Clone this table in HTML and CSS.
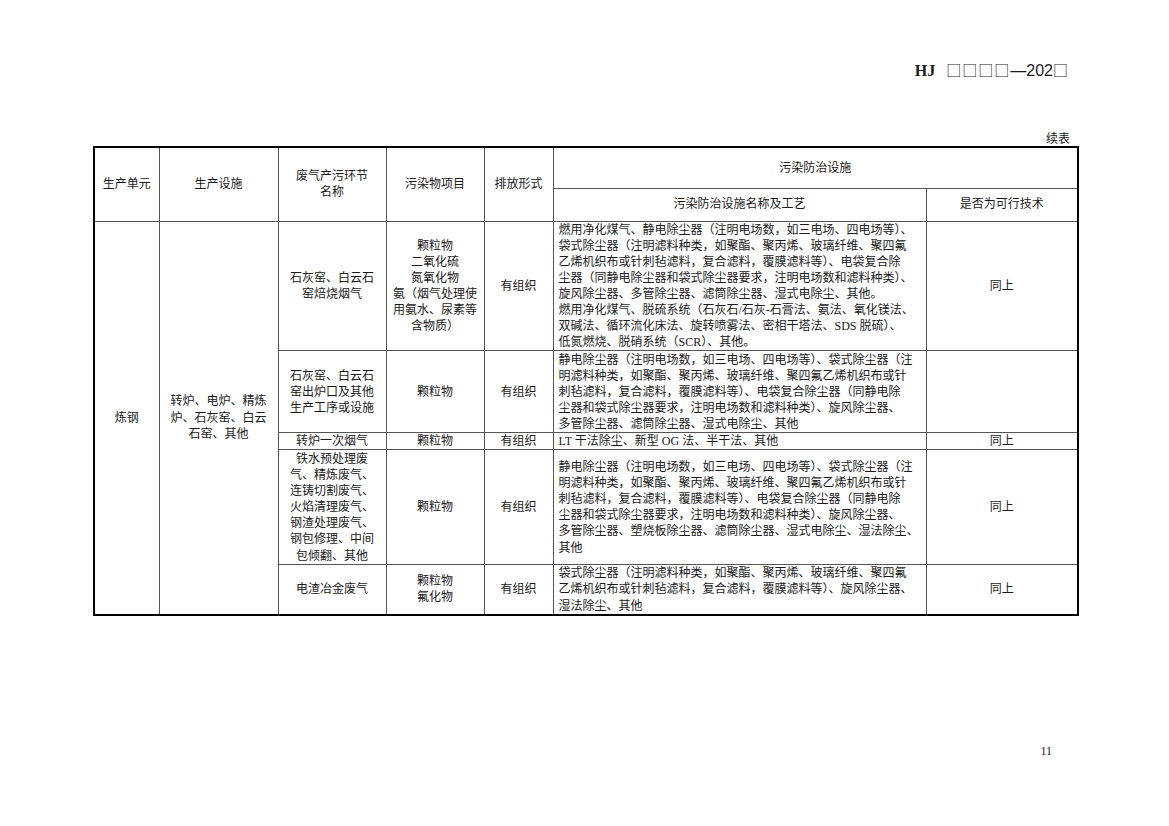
FILE: index.html
```html
<!DOCTYPE html>
<html lang="zh-CN">
<head>
<meta charset="utf-8">
<title>HJ 续表</title>
<link rel="stylesheet" href="styles.css">
</head>
<body>
<div class="page">
  <div class="doc-head"><span class="hj">HJ</span><span class="boxes">□□□□</span><span class="num">—202</span><span class="boxes">□</span></div>
  <div class="cont">续表</div>
  <table class="grid">
    <colgroup>
      <col class="c1"><col class="c2"><col class="c3"><col class="c4"><col class="c5"><col class="c6"><col class="c7">
    </colgroup>
    <thead>
      <tr class="h1">
        <th rowspan="2">生产单元</th>
        <th rowspan="2">生产设施</th>
        <th rowspan="2">废气产污环节<br>名称</th>
        <th rowspan="2">污染物项目</th>
        <th rowspan="2">排放形式</th>
        <th colspan="2">污染防治设施</th>
      </tr>
      <tr class="h2">
        <th>污染防治设施名称及工艺</th>
        <th>是否为可行技术</th>
      </tr>
    </thead>
    <tbody>
      <tr class="r1">
        <td rowspan="5">炼钢</td>
        <td rowspan="5">转炉、电炉、精炼<br>炉、石灰窑、白云<br>石窑、其他</td>
        <td>石灰窑、白云石<br>窑焙烧烟气</td>
        <td>颗粒物<br>二氧化硫<br>氮氧化物<br>氨（烟气处理使<br>用氨水、尿素等<br>含物质）</td>
        <td>有组织</td>
        <td class="desc">燃用净化煤气、静电除尘器（注明电场数，如三电场、四电场等）、<br>袋式除尘器（注明滤料种类，如聚酯、聚丙烯、玻璃纤维、聚四氟<br>乙烯机织布或针刺毡滤料，复合滤料，覆膜滤料等）、电袋复合除<br>尘器（同静电除尘器和袋式除尘器要求，注明电场数和滤料种类）、<br>旋风除尘器、多管除尘器、滤筒除尘器、湿式电除尘、其他。<br>燃用净化煤气、脱硫系统（石灰石/石灰-石膏法、氨法、氧化镁法、<br>双碱法、循环流化床法、旋转喷雾法、密相干塔法、SDS 脱硫）、<br>低氮燃烧、脱硝系统（SCR）、其他。</td>
        <td>同上</td>
      </tr>
      <tr class="r2">
        <td>石灰窑、白云石<br>窑出炉口及其他<br>生产工序或设施</td>
        <td>颗粒物</td>
        <td>有组织</td>
        <td class="desc">静电除尘器（注明电场数，如三电场、四电场等）、袋式除尘器（注<br>明滤料种类，如聚酯、聚丙烯、玻璃纤维、聚四氟乙烯机织布或针<br>刺毡滤料，复合滤料，覆膜滤料等）、电袋复合除尘器（同静电除<br>尘器和袋式除尘器要求，注明电场数和滤料种类）、旋风除尘器、<br>多管除尘器、滤筒除尘器、湿式电除尘、其他</td>
        <td></td>
      </tr>
      <tr class="r3">
        <td>转炉一次烟气</td>
        <td>颗粒物</td>
        <td>有组织</td>
        <td class="desc">LT 干法除尘、新型 OG 法、半干法、其他</td>
        <td>同上</td>
      </tr>
      <tr class="r4">
        <td>铁水预处理废<br>气、精炼废气、<br>连铸切割废气、<br>火焰清理废气、<br>钢渣处理废气、<br>钢包修理、中间<br>包倾翻、其他</td>
        <td>颗粒物</td>
        <td>有组织</td>
        <td class="desc">静电除尘器（注明电场数，如三电场、四电场等）、袋式除尘器（注<br>明滤料种类，如聚酯、聚丙烯、玻璃纤维、聚四氟乙烯机织布或针<br>刺毡滤料，复合滤料，覆膜滤料等）、电袋复合除尘器（同静电除<br>尘器和袋式除尘器要求，注明电场数和滤料种类）、旋风除尘器、<br>多管除尘器、塑烧板除尘器、滤筒除尘器、湿式电除尘、湿法除尘、<br>其他</td>
        <td>同上</td>
      </tr>
      <tr class="r5">
        <td>电渣冶金废气</td>
        <td>颗粒物<br>氟化物</td>
        <td>有组织</td>
        <td class="desc">袋式除尘器（注明滤料种类，如聚酯、聚丙烯、玻璃纤维、聚四氟<br>乙烯机织布或针刺毡滤料，复合滤料，覆膜滤料等）、旋风除尘器、<br>湿法除尘、其他</td>
        <td>同上</td>
      </tr>
    </tbody>
  </table>
  <div class="folio">11</div>
</div>
</body>
</html>
```
FILE: styles.css
```css
html, body {
  margin: 0;
  padding: 0;
  background: #fff;
}
body {
  font-family: "Liberation Serif", "Noto Sans CJK SC", serif;
  color: #1a1a1a;
}
.page {
  width: 1169px;
  height: 826px;
  box-sizing: border-box;
  padding: 60px 92px 0 93px;
}
.doc-head {
  text-align: right;
  font-size: 16px;
  line-height: 20px;
  height: 20px;
  padding-right: 8px;
  white-space: nowrap;
}
.doc-head .hj {
  font-weight: bold;
  font-family: "Liberation Serif", serif;
  margin-right: 11px;
}
.doc-head .boxes {
  font-family: "Noto Sans CJK SC", sans-serif;
  font-size: 15px;
  letter-spacing: 1px;
}
.doc-head .num {
  font-family: "Liberation Sans", sans-serif;
}
.cont {
  margin-top: 51px;
  text-align: right;
  font-size: 12px;
  line-height: 16px;
  padding-right: 7px;
  margin-bottom: -1px;
}
.grid {
  width: 984px;
  table-layout: fixed;
  border-collapse: collapse;
  border: 2px solid #000;
  font-size: 12px;
  line-height: 16.1px;
}
.c1 { width: 65px; }
.c2 { width: 119px; }
.c3 { width: 108px; }
.c4 { width: 98px; }
.c5 { width: 69px; }
.c6 { width: 373px; }
.c7 { width: 152px; }
.grid th, .grid td {
  border: 1px solid #555;
  padding: 0 2px;
  text-align: center;
  vertical-align: middle;
  font-weight: normal;
  white-space: nowrap;
  overflow: hidden;
}
.grid .desc {
  text-align: left;
  padding: 0 4px 0 5px;
}
.h1 { height: 41px; }
.h2 { height: 33px; }
.r1 { height: 129px; }
.r2 { height: 82px; }
.r3 { height: 17px; }
.r4 { height: 115px; }
.r5 { height: 49px; }
.folio {
  margin-top: 127px;
  text-align: right;
  font-size: 12px;
  line-height: 16px;
  padding-right: 25px;
}
```
